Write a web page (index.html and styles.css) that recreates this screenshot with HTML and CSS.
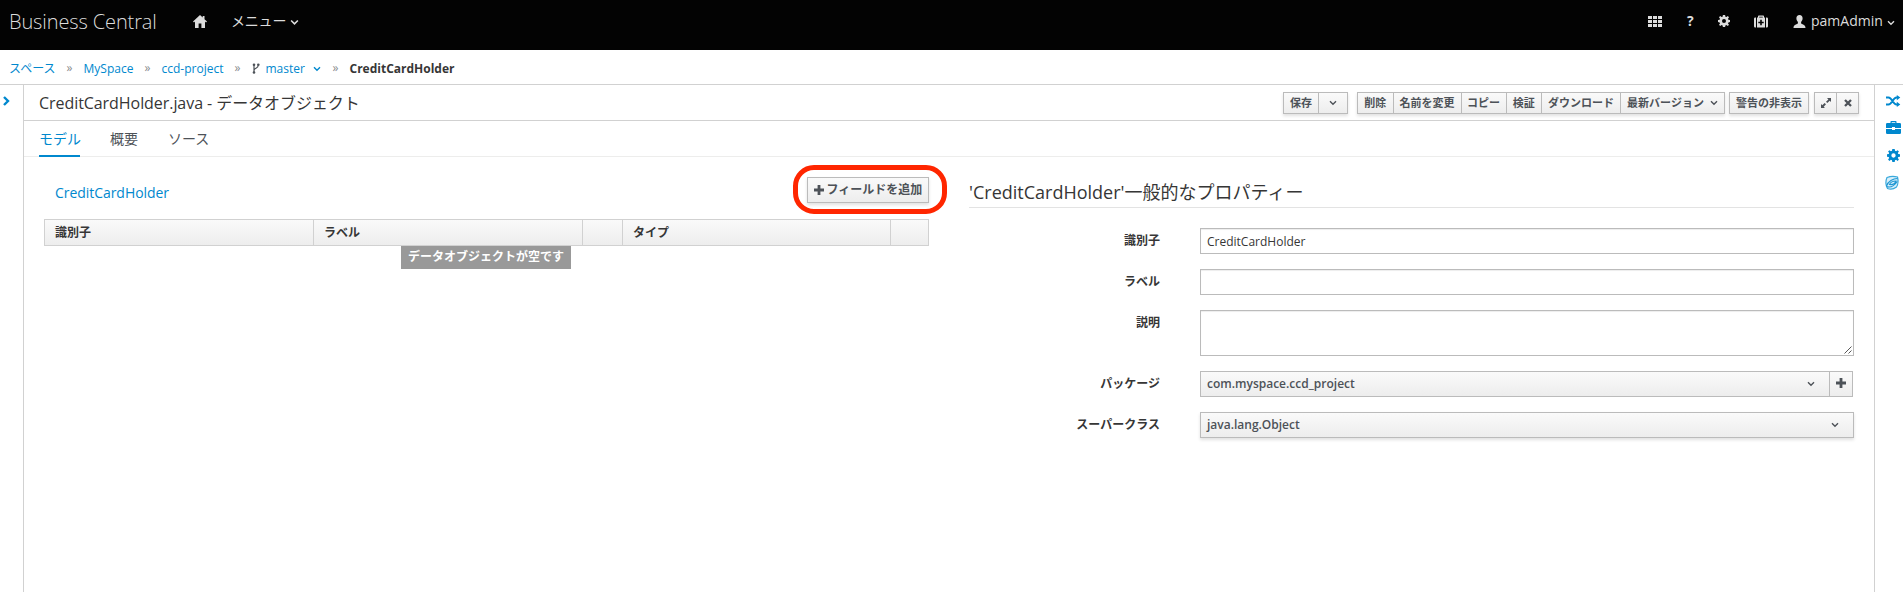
FILE: index.html
```html
<!DOCTYPE html>
<html lang="ja">
<head>
<meta charset="utf-8">
<title>Business Central</title>
<link rel="stylesheet" href="styles.css">
</head>
<body>
<svg class="defs" width="0" height="0">
  <symbol id="chev" viewBox="0 0 8 6"><path d="M1 1.2 4 4.2 7 1.2" fill="none" stroke="currentColor" stroke-width="1.4"/></symbol>
  <symbol id="plus" viewBox="0 0 10 10"><path d="M3.6 0h2.8v3.6H10v2.8H6.4V10H3.6V6.4H0V3.6h3.6z" fill="currentColor"/></symbol>
  <symbol id="gear" viewBox="0 0 12 12"><path fill="currentColor" fill-rule="evenodd" d="M4.9 0h2.2l.3 1.7 1 .4L9.8 1.100 11 2.300l-1 1.400.4 1 1.600.2v2.200l-1.600.3-.4 1 1 1.400-1.200 1.200-1.400-1-1 .4L7.100 12H4.900l-.3-1.600-1-.4-1.400 1L1 9.800l1-1.400-.4-1L0 7.100V4.900l1.600-.2.4-1-1-1.400 1.200-1.200 1.400 1 1-.4zM6 4a2 2 0 1 0 0 4 2 2 0 0 0 0-4z"/></symbol>
</svg>
<header class="topbar">
  <span class="brand">Business Central</span>
  <svg class="home" viewBox="0 0 14 13"><path fill="currentColor" d="M7 0 0 6.500 1 7.400 2 6.600V13h3.600V8.500h2.800V13H12V6.600l1 .8 1-.9-2.500-2.300V1H9.700v1.500z"/></svg>
  <span class="menu">メニュー</span>
  <svg class="menu-chev" viewBox="0 0 8 6"><use href="#chev"/></svg>
  <div class="tools">
    <svg class="apps" viewBox="0 0 14 11"><path fill="currentColor" d="M0 0h4v3H0zM5 0h4v3H5zM10 0h4v3h-4zM0 4h4v3H0zM5 4h4v3H5zM10 4h4v3h-4zM0 8h4v3H0zM5 8h4v3H5zM10 8h4v3h-4z"/></svg>
    <span class="help">?</span>
    <svg class="cog" viewBox="0 0 12 12"><use href="#gear"/></svg>
    <svg class="kit" viewBox="0 0 14 12"><path fill="currentColor" fill-rule="evenodd" d="M4 2V.8Q4 0 4.800 0h4.400Q10 0 10 .8V2h1v10H3V2zM5.200 2h3.600V1.200H5.200zM6.200 4.200v2H4.300v1.600h1.900v2h1.600v-2h1.900V6.200H7.800v-2zM2 2v10H1.300Q0 12 0 10.800V3.200Q0 2 1.300 2zM12 2v10h.7q1.300 0 1.300-1.200V3.200Q14 2 12.700 2z"/></svg>
    <svg class="user" viewBox="0 0 12 13"><path fill="currentColor" d="M6 0c2 0 3.200 1.300 3.100 3.500C9 5.300 8.300 6 7.600 7v1.500c1 .9 4.400 1 4.400 4.500H0c0-3.500 3.400-3.600 4.400-4.500V7C3.700 6 3 5.300 2.900 3.500 2.800 1.300 4 0 6 0z"/></svg>
    <span class="username">pamAdmin</span>
    <svg class="user-chev" viewBox="0 0 8 6"><use href="#chev"/></svg>
  </div>
</header>
<nav class="crumbs">
  <a class="c1">スペース</a><span class="sep">»</span>
  <a class="c2">MySpace</a><span class="sep">»</span>
  <a class="c3">ccd-project</a><span class="sep">»</span>
  <svg class="branch" viewBox="0 0 8 11"><path d="M2 2v7.500M6.200 2.500c0 3-4.200 2.500-4.200 5" fill="none" stroke="currentColor" stroke-width="1.200"/><circle cx="2" cy="1.800" r="1.300" fill="currentColor"/><circle cx="6.300" cy="1.800" r="1.300" fill="currentColor"/><circle cx="2" cy="9.500" r="1.300" fill="currentColor"/></svg>
  <a class="c4">master</a><svg class="crumb-chev" viewBox="0 0 8 6"><use href="#chev"/></svg><span class="sep">»</span>
  <b class="current">CreditCardHolder</b>
</nav>
<main class="work">
  <aside class="rail-left"><svg viewBox="0 0 7 10"><path d="M1 1l4 4-4 4" fill="none" stroke="currentColor" stroke-width="2.400"/></svg></aside>
  <section class="editor">
    <div class="titlebar">
      <h1>CreditCardHolder.java - データオブジェクト</h1>
      <div class="actions">
        <div class="group save"><button class="w35">保存</button><button class="w30"><svg class="chev" viewBox="0 0 8 6"><use href="#chev"/></svg></button></div>
        <div class="group ops"><button class="w36">削除</button><button class="w69">名前を変更</button><button class="w45">コピー</button><button class="w36">検証</button><button class="w79">ダウンロード</button><button class="w106">最新バージョン<svg class="chev" viewBox="0 0 8 6"><use href="#chev"/></svg></button></div>
        <div class="group warn"><button class="w80">警告の非表示</button></div>
        <div class="group win"><button class="w23"><svg class="expand" viewBox="0 0 10 10"><path fill="currentColor" d="M6 0h4v4L8.700 2.700 6.300 5.100 5 3.800l2.400-2.400zM0 6l1.300 1.300 2.300-2.300L5 6.300 2.700 8.700 4 10H0z"/></svg></button><button class="w23"><svg class="close" viewBox="0 0 8 8"><path d="M1 1l6 6M7 1 1 7" stroke="currentColor" stroke-width="2.300"/></svg></button></div>
      </div>
    </div>
    <div class="tabs"><a class="tab active">モデル</a><a class="tab">概要</a><a class="tab">ソース</a></div>
    <div class="panes">
      <div class="fields">
        <div class="fields-head">
          <a class="object">CreditCardHolder</a>
          <div class="callout"><button class="add"><svg viewBox="0 0 10 10"><use href="#plus"/></svg>フィールドを追加</button></div>
        </div>
        <div class="grid"><span>識別子</span><span>ラベル</span><span></span><span>タイプ</span><span></span></div>
        <div class="empty">データオブジェクトが空です</div>
      </div>
      <div class="props">
        <h2>'CreditCardHolder'一般的なプロパティー</h2>
        <div class="row"><label>識別子</label><div class="input">CreditCardHolder</div></div>
        <div class="row"><label>ラベル</label><div class="input"></div></div>
        <div class="row"><label>説明</label><div class="input area"><svg viewBox="0 0 8 8"><path d="M.5 7.500l7-7M4.500 7.500l3-3" stroke="#444" stroke-width=".9"/></svg></div></div>
        <div class="row"><label>パッケージ</label><div class="combo"><div class="select joined">com.myspace.ccd_project<svg class="chev" viewBox="0 0 8 6"><use href="#chev"/></svg></div><button class="more"><svg viewBox="0 0 10 10"><use href="#plus"/></svg></button></div></div>
        <div class="row"><label>スーパークラス</label><div class="select raised">java.lang.Object<svg class="chev" viewBox="0 0 8 6"><use href="#chev"/></svg></div></div>
      </div>
    </div>
  </section>
  <aside class="rail-right">
    <svg class="shuffle" viewBox="0 0 14 12"><path d="M0 2.500h2.500C6 2.500 7 9.500 10.500 9.500H12M0 9.500h2.500C6 9.500 7 2.500 10.500 2.500H12" fill="none" stroke="currentColor" stroke-width="1.900"/><path fill="currentColor" d="M10.800 0 14.300 2.600l-3.500 2.700zM10.800 6.800l3.500 2.600-3.500 2.600z"/></svg>
    <svg class="case" viewBox="0 0 15 13"><path fill="currentColor" fill-rule="evenodd" d="M4.500 2V.8Q4.500 0 5.300 0h4.400q.8 0 .8.800V2h3.300Q15 2 15 3.200V7H9V6H6v1H0V3.200Q0 2 1.200 2zM5.700 2h3.600v-.8H5.700zM0 7.900h6v1.200h3V7.900h6v3.900q0 1.200-1.200 1.200H1.200Q0 13 0 11.800z"/></svg>
    <svg class="gear" viewBox="0 0 12 12"><use href="#gear"/></svg>
    <svg class="globe" viewBox="0 0 14 14"><path d="M2 1.500Q7-.5 12.500 1q1.500 6-1 10Q7 14.500 2.500 12.500-.5 7 2 1.500z" fill="#d8eff9" stroke="#39a9dc" stroke-width="1.200"/><path d="M1.500 10C3 5.500 8 2.500 12.500 2.500M1.500 10.500c4 1.500 8-1 10.800-5M4.500 8.500c1-2.500 3.500-3.500 6.500-3.500-1 2.500-3.500 4-6.500 3.500z" fill="none" stroke="#1f97d4" stroke-width="1.100"/></svg>
  </aside>
</main>
</body>
</html>
```
FILE: styles.css
```css
* { box-sizing: border-box; }
body { margin: 0; height: 592px; overflow: hidden; background: #fff; color: #363636; font: 12px/20px "Open Sans", "Noto Sans CJK JP", sans-serif; }
svg { display: block; flex: none; overflow: visible; }
.defs { position: absolute; }
button { font: inherit; color: #4d5258; padding: 0; margin: 0; }
.topbar { height: 50px; background: #030303; color: #dcdcdc; display: flex; align-items: center; padding: 0 8px 8px 9px; }
.brand { width: 184px; font-size: 20px; font-weight: 300; line-height: 28px; letter-spacing: -.12px; white-space: nowrap; padding-top: 2px; }
.home { width: 14px; height: 13px; margin-right: 24px; }
.menu { font-size: 14px; letter-spacing: -.2px; width: 59px; white-space: nowrap; }
.menu-chev { width: 9px; height: 7px; margin-top: 3px; }
.tools { display: flex; align-items: center; margin-left: auto; }
.apps { width: 14px; height: 11px; }
.help { font-size: 14px; font-weight: 700; width: 8px; margin-left: 25px; }
.cog { width: 12px; height: 12px; margin-left: 23px; }
.kit { width: 14px; height: 13px; margin-left: 24px; }
.user { width: 13px; height: 13px; margin: 1px 5px 0 25px; }
.username { font-size: 14px; width: 72px; }
.user-chev { width: 8px; height: 6px; margin: 3px 0 0 4px; }
.crumbs { height: 35px; border-bottom: 1px solid #d1d1d1; display: flex; align-items: center; padding: 3px 0 0 9px; white-space: nowrap; }
.crumbs a { color: #0088ce; }
.crumbs b { font-weight: 700; }
.sep { color: #8b8d8f; width: 6px; margin: -1px 11px 1px; }
.c1 { width: 46.500px; }
.c2 { width: 50px; }
.c3 { width: 62px; }
.c4 { width: 39px; }
.branch { width: 8px; height: 11px; margin: 0 6px 0 0; color: #4d5258; }
.crumb-chev { color: #0088ce; width: 8px; height: 6px; margin: 1px 1px 0 8px; }
.work { display: flex; height: 507px; }
.rail-left { width: 24px; border-right: 1px solid #d1d1d1; color: #0088ce; padding: 11px 0 0 3px; }
.rail-left svg { width: 7px; height: 10px; }
.rail-right { width: 29px; border-left: 1px solid #d1d1d1; color: #0088ce; padding-left: 11px; }
.shuffle { width: 14px; height: 12px; margin-top: 10px; }
.case { width: 15px; height: 13px; margin-top: 14px; }
.gear { width: 13px; height: 13px; margin: 15px 0 0 1px; }
.globe { width: 14px; height: 14px; margin: 14px 0 0 -1px; }
.editor { flex: 1; min-width: 0; }
.titlebar { height: 36px; border-bottom: 1px solid #d1d1d1; padding: 0 15px; display: flex; justify-content: space-between; }
h1 { margin: 0; font-size: 16px; font-weight: 400; letter-spacing: -.06px; line-height: 36px; white-space: nowrap; }
.actions { display: flex; padding-top: 7px; font-size: 11px; font-weight: 600; }
.group { display: flex; height: 22px; box-shadow: 0 2px 3px rgba(3,3,3,.12); }
.group button { height: 22px; border: 1px solid #bbb; border-right: 0; background: linear-gradient(#fafafa, #ededed); display: flex; align-items: center; justify-content: center; gap: 6px; line-height: 18px; white-space: nowrap; }
.group button:last-child { border-right: 1px solid #bbb; }
.chev { width: 8px; height: 6px; }
.ops { margin-left: 9px; }
.warn { margin-left: 4px; }
.win { margin-left: 5px; }
.w35 { width: 35px; } .w30 { width: 30px; } .w36 { width: 35.500px; } .w69 { width: 68px; } .w45 { width: 45px; } .w79 { width: 79px; } .w106 { width: 105px; } .w80 { width: 80px; }
.win .w23:first-child { width: 22px; }
.w23 { width: 23px; }
.expand { width: 10px; height: 10px; }
.close { width: 8px; height: 8px; }
.tabs { height: 36px; border-bottom: 1px solid #ededec; display: flex; gap: 30px; padding-left: 15px; }
.tab { height: 36px; font-size: 14px; line-height: 35px; color: #4d5258; }
.active { width: 41px; color: #0088ce; border-bottom: 2px solid #0088ce; white-space: nowrap; }
.panes { display: flex; }
.fields { width: 885px; margin-left: 20px; }
.fields-head { height: 62px; display: flex; justify-content: space-between; padding-left: 11px; }
.object { color: #0088ce; font-size: 14px; letter-spacing: -.05px; margin-top: 26px; }
.callout { width: 154px; height: 49px; margin: 8px -18px 0 0; border: 5px solid #ff2600; border-radius: 21px; padding: 7px 0 0 9px; }
.add { width: 122px; height: 26px; border: 1px solid #bbb; background: linear-gradient(#fafafa, #ededed); box-shadow: 0 2px 3px rgba(3,3,3,.12); display: flex; align-items: center; justify-content: center; gap: 3px; font-weight: 600; white-space: nowrap; }
.add svg { width: 10px; height: 10px; }
.grid { height: 27px; border: 1px solid #d1d1d1; background: linear-gradient(#fafafa, #ededed); display: grid; grid-template-columns: 269px 269px 40px 268px 1fr; font-weight: 700; line-height: 25px; }
.grid span { padding-left: 10px; border-right: 1px solid #d1d1d1; }
.grid span:last-child { border: 0; }
.empty { width: 170px; height: 23px; margin-left: 357px; background: #999; color: #fff; font-weight: 700; text-align: center; line-height: 22px; white-space: nowrap; }
.props { width: 885px; margin-left: 40px; }
h2 { margin: 20px 0 20px; height: 31px; font-size: 18px; font-weight: 400; line-height: 31px; border-bottom: 1px solid #e3e3e3; white-space: nowrap; }
.row { display: flex; align-items: flex-start; margin-bottom: 15px; }
label { width: 191px; margin-right: 40px; text-align: right; font-weight: 700; line-height: 26px; }
.input { width: 654px; height: 26px; border: 1px solid #bbb; box-shadow: inset 0 1px 1px rgba(3,3,3,.075); padding: 3px 6px; }
.area { height: 46px; display: flex; justify-content: flex-end; align-items: flex-end; padding: 1px; }
.area svg { width: 8px; height: 8px; }
.combo { display: flex; }
.select { width: 654px; height: 26px; border: 1px solid #bbb; background: linear-gradient(#fafafa, #ededed); color: #4d5258; font-weight: 600; display: flex; align-items: center; justify-content: space-between; padding: 0 14px 1px 6px; }
.joined { width: 630px; }
.raised { box-shadow: 0 2px 3px rgba(3,3,3,.12); }
.more { width: 23px; height: 26px; border: 1px solid #bbb; border-left: 0; background: linear-gradient(#fafafa, #ededed); display: flex; align-items: center; justify-content: center; padding-bottom: 2px; }
.more svg { width: 10px; height: 10px; }
```
